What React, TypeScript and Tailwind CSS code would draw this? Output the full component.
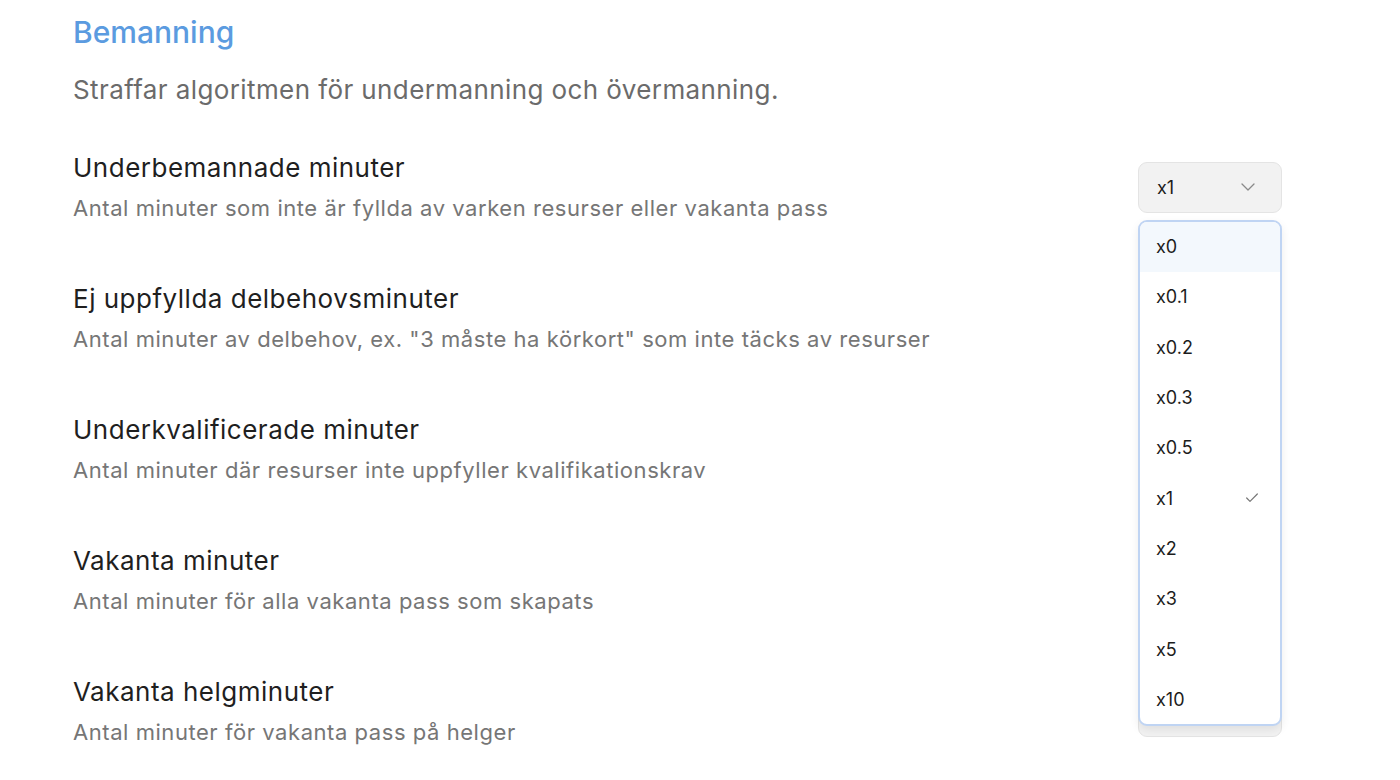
import { Check, ChevronDown } from 'lucide-react';

const ROWS = [
  {
    title: 'Underbemannade minuter',
    desc: 'Antal minuter som inte är fyllda av varken resurser eller vakanta pass',
  },
  {
    title: 'Ej uppfyllda delbehovsminuter',
    desc: 'Antal minuter av delbehov, ex. "3 måste ha körkort" som inte täcks av resurser',
  },
  {
    title: 'Underkvalificerade minuter',
    desc: 'Antal minuter där resurser inte uppfyller kvalifikationskrav',
  },
  {
    title: 'Vakanta minuter',
    desc: 'Antal minuter för alla vakanta pass som skapats',
  },
  {
    title: 'Vakanta helgminuter',
    desc: 'Antal minuter för vakanta pass på helger',
  },
];

const OPTIONS = ['x0', 'x0.1', 'x0.2', 'x0.3', 'x0.5', 'x1', 'x2', 'x3', 'x5', 'x10'];

function Select({ open, covered }: { open: boolean; covered: boolean }) {
  return (
    <div className="relative w-[144px] shrink-0">
      <button className="flex h-[51px] w-full items-center justify-between rounded-[9px] border border-[#e4e4e4] bg-[#f2f2f2] pl-[18px] pr-[21px] text-[18px] text-[#1c1c1c]">
        {/* selects hidden behind the open menu keep their label out of view */}
        <span className={covered ? 'invisible' : ''}>x1</span>
        <ChevronDown size={24} strokeWidth={1.3} className={covered ? 'invisible' : 'text-[#8a8a8a]'} />
      </button>
      {open && (
        <div className="absolute left-0 top-[58px] z-10 w-full overflow-hidden rounded-[9px] border-2 border-[#bfd4f3] bg-white shadow-[0_4px_10px_rgba(0,0,0,0.08)]">
          <ul>
            {OPTIONS.map((opt, i) => (
              <li
                key={opt}
                className={`flex h-[50.3px] items-center justify-between pl-[16px] pr-[20px] text-[18px] text-[#1c1c1c] ${i === 0 ? 'bg-[#f3f8fd]' : ''}`}
              >
                <span>{opt}</span>
                {opt === 'x1' && <Check size={16} strokeWidth={1.8} className="text-[#767676]" />}
              </li>
            ))}
          </ul>
        </div>
      )}
    </div>
  );
}

export default function App() {
  return (
    <div className="min-h-screen bg-white pl-[73px] pr-[118px] pt-[14px] font-['Inter','Noto_Sans',sans-serif]">
      <h2 className="text-[30px] leading-[36px] font-medium text-[#5b9be0]">Bemanning</h2>
      <p className="mt-[24px] text-[26px] leading-[32px] tracking-[0.4px] text-[#6b6b6b]">
        Straffar algoritmen för undermanning och övermanning.
      </p>

      <div className="mt-[46px] flex flex-col gap-[61px]">
        {ROWS.map((row, i) => (
          <div key={row.title} className="flex items-center justify-between">
            <div>
              <div className="text-[26px] leading-[32px] tracking-[0.5px] text-[#1f1f1f]">{row.title}</div>
              <div className="mt-[10px] text-[22px] leading-[28px] tracking-[0.55px] text-[#767676]">{row.desc}</div>
            </div>
            <Select open={i === 0} covered={i > 0} />
          </div>
        ))}
      </div>
    </div>
  );
}
